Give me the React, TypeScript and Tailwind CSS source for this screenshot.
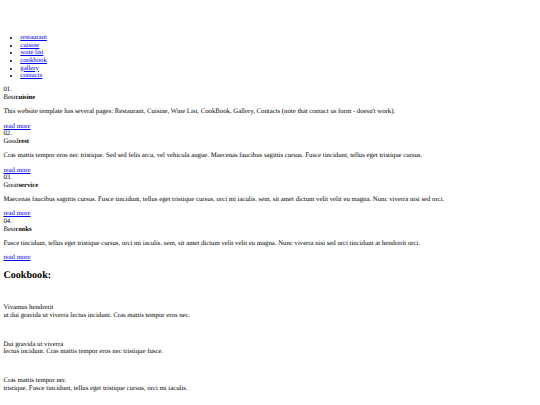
import React from "react";

const nav = ["restaurant", "cuisine", "wine list", "cookbook", "gallery", "contacts"];

const features = [
  {
    n: "01.",
    a: "Best",
    b: "cuisine",
    text: "This website template has several pages: Restaurant, Cuisine, Wine List, CookBook, Gallery, Contacts (note that contact us form - doesn't work).",
  },
  {
    n: "02.",
    a: "Good",
    b: "rest",
    text: "Cras mattis tempor eros nec tristique. Sed sed felis arcu, vel vehicula augue. Maecenas faucibus sagittis cursus. Fusce tincidunt, tellus eget tristique cursus.",
  },
  {
    n: "03.",
    a: "Great",
    b: "service",
    text: "Maecenas faucibus sagittis cursus. Fusce tincidunt, tellus eget tristique cursus, orci mi iaculis. sem, sit amet dictum velit velit eu magna. Nunc viverra nisi sed orci.",
  },
  {
    n: "04.",
    a: "Best",
    b: "cooks",
    text: "Fusce tincidunt, tellus eget tristique cursus, orci mi iaculis. sem, sit amet dictum velit velit eu magna. Nunc viverra nisi sed orci tincidunt at hendrerit orci.",
  },
];

const cook = [
  ["Vivamus hendrerit", "ut dui gravida ut viverra lectus incidunt. Cras mattis tempor eros nec."],
  ["Dui gravida ut viverra", "lectus incidunt. Cras mattis tempor eros nec tristique fusce."],
  ["Cras mattis tempor nec", "tristique. Fusce tincidunt, tellus eget tristique cursus, orci mi iaculis."],
];

export default function App() {
  return (
    <div className="min-h-screen bg-white p-[3.375px] font-[family-name:'Liberation_Serif',serif] text-[6.75px] leading-[7.59px] text-black [text-rendering:geometricPrecision]">
      <div className="h-[24px]" />
      <ul className="my-[6.75px] list-disc pl-[16.875px]">
        {nav.map((n) => (
          <li key={n}>
            <a href="#" className="text-[#0000ee] underline">
              {n}
            </a>
          </li>
        ))}
      </ul>
      {features.map((f) => (
        <div key={f.n}>
          <div>{f.n}</div>
          <div>
            {f.a}
            <b className="font-bold">{f.b}</b>
          </div>
          <p className="my-[6.75px]">{f.text}</p>
          <a href="#" className="text-[#0000ee] underline">
            read more
          </a>
        </div>
      ))}
      <h2 className="my-[8.4px] text-[10.125px] font-bold leading-[11.39px]">Cookbook:</h2>
      <div className="flex flex-col gap-[21.3px] pt-[14.2px]">
        {cook.map(([t, d]) => (
          <div key={t}>
            <div>{t}</div>
            <div>{d}</div>
          </div>
        ))}
      </div>
    </div>
  );
}
